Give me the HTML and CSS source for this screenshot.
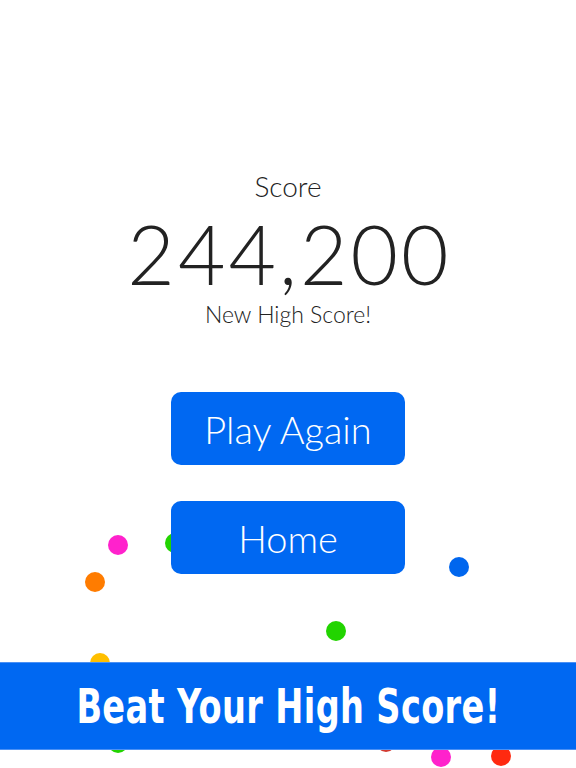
FILE: index.html
```html
<!DOCTYPE html>
<html>
<head>
<meta charset="utf-8">
<link rel="stylesheet" href="styles.css">
</head>
<body>
<div class="screen">
  <div class="dots">
    <span class="dot magenta" style="left:108px;top:535px"></span>
    <span class="dot green" style="left:165px;top:533px"></span>
    <span class="dot orange" style="left:85px;top:572px"></span>
    <span class="dot blue" style="left:449px;top:557px"></span>
    <span class="dot green" style="left:326px;top:621px"></span>
    <span class="dot yellow" style="left:90px;top:653px"></span>
    <span class="dot green" style="left:108px;top:733px"></span>
    <span class="dot darkred" style="left:376px;top:732px"></span>
    <span class="dot magenta" style="left:431px;top:747px"></span>
    <span class="dot red" style="left:491px;top:746px"></span>
  </div>
  <main class="content">
    <div class="label">Score</div>
    <div class="score">244,200</div>
    <div class="sub">New High Score!</div>
    <div class="buttons">
      <div class="btn">Play Again</div>
      <div class="btn">Home</div>
    </div>
  </main>
  <div class="banner"><span class="banner-text">Beat Your High Score!</span></div>
</div>
</body>
</html>
```
FILE: styles.css
```css
html, body {
  margin: 0;
  padding: 0;
  background: #ffffff;
}
.screen {
  position: relative;
  width: 576px;
  height: 768px;
  overflow: hidden;
  background: #ffffff;
}
.dots {
  position: absolute;
  inset: 0;
}
.dot {
  position: absolute;
  width: 20px;
  height: 20px;
  border-radius: 50%;
}
.magenta { background: #ff22cc; }
.green { background: #22d400; }
.orange { background: #ff7c00; }
.blue { background: #0066ee; }
.yellow { background: #ffbf00; }
.darkred { background: #d23a30; }
.red { background: #ff2a10; }
.content {
  position: relative;
  display: flex;
  flex-direction: column;
  align-items: center;
  padding-top: 168px;
  font-family: Lato, "Open Sans", sans-serif;
  font-weight: 300;
  color: #222222;
}
.label {
  font-size: 28px;
  line-height: 36px;
}
.score {
  font-size: 82px;
  line-height: 84px;
  margin-top: 7px;
  letter-spacing: 3px;
  padding-left: 3px;
}
.sub {
  font-size: 23px;
  line-height: 30px;
  margin-top: 4px;
}
.buttons {
  display: flex;
  flex-direction: column;
  gap: 36px;
  margin-top: 63px;
}
.btn {
  width: 234px;
  height: 73px;
  border-radius: 10px;
  background: #0068f2;
  color: #ffffff;
  font-size: 38px;
  display: flex;
  align-items: center;
  justify-content: center;
}
.banner {
  position: absolute;
  left: 0;
  right: 0;
  top: 662px;
  height: 88px;
  background: #0068f2;
  border-top: 1px solid #4a90f5;
  border-bottom: 1px solid #4a90f5;
  box-sizing: border-box;
  color: #ffffff;
  display: flex;
  align-items: center;
  justify-content: center;
}
.banner-text {
  display: inline-block;
  font-family: "DejaVu Sans", sans-serif;
  font-weight: 700;
  font-size: 46px;
  letter-spacing: 0.5px;
  white-space: nowrap;
  transform: scale(0.73, 1.05);
}
```
